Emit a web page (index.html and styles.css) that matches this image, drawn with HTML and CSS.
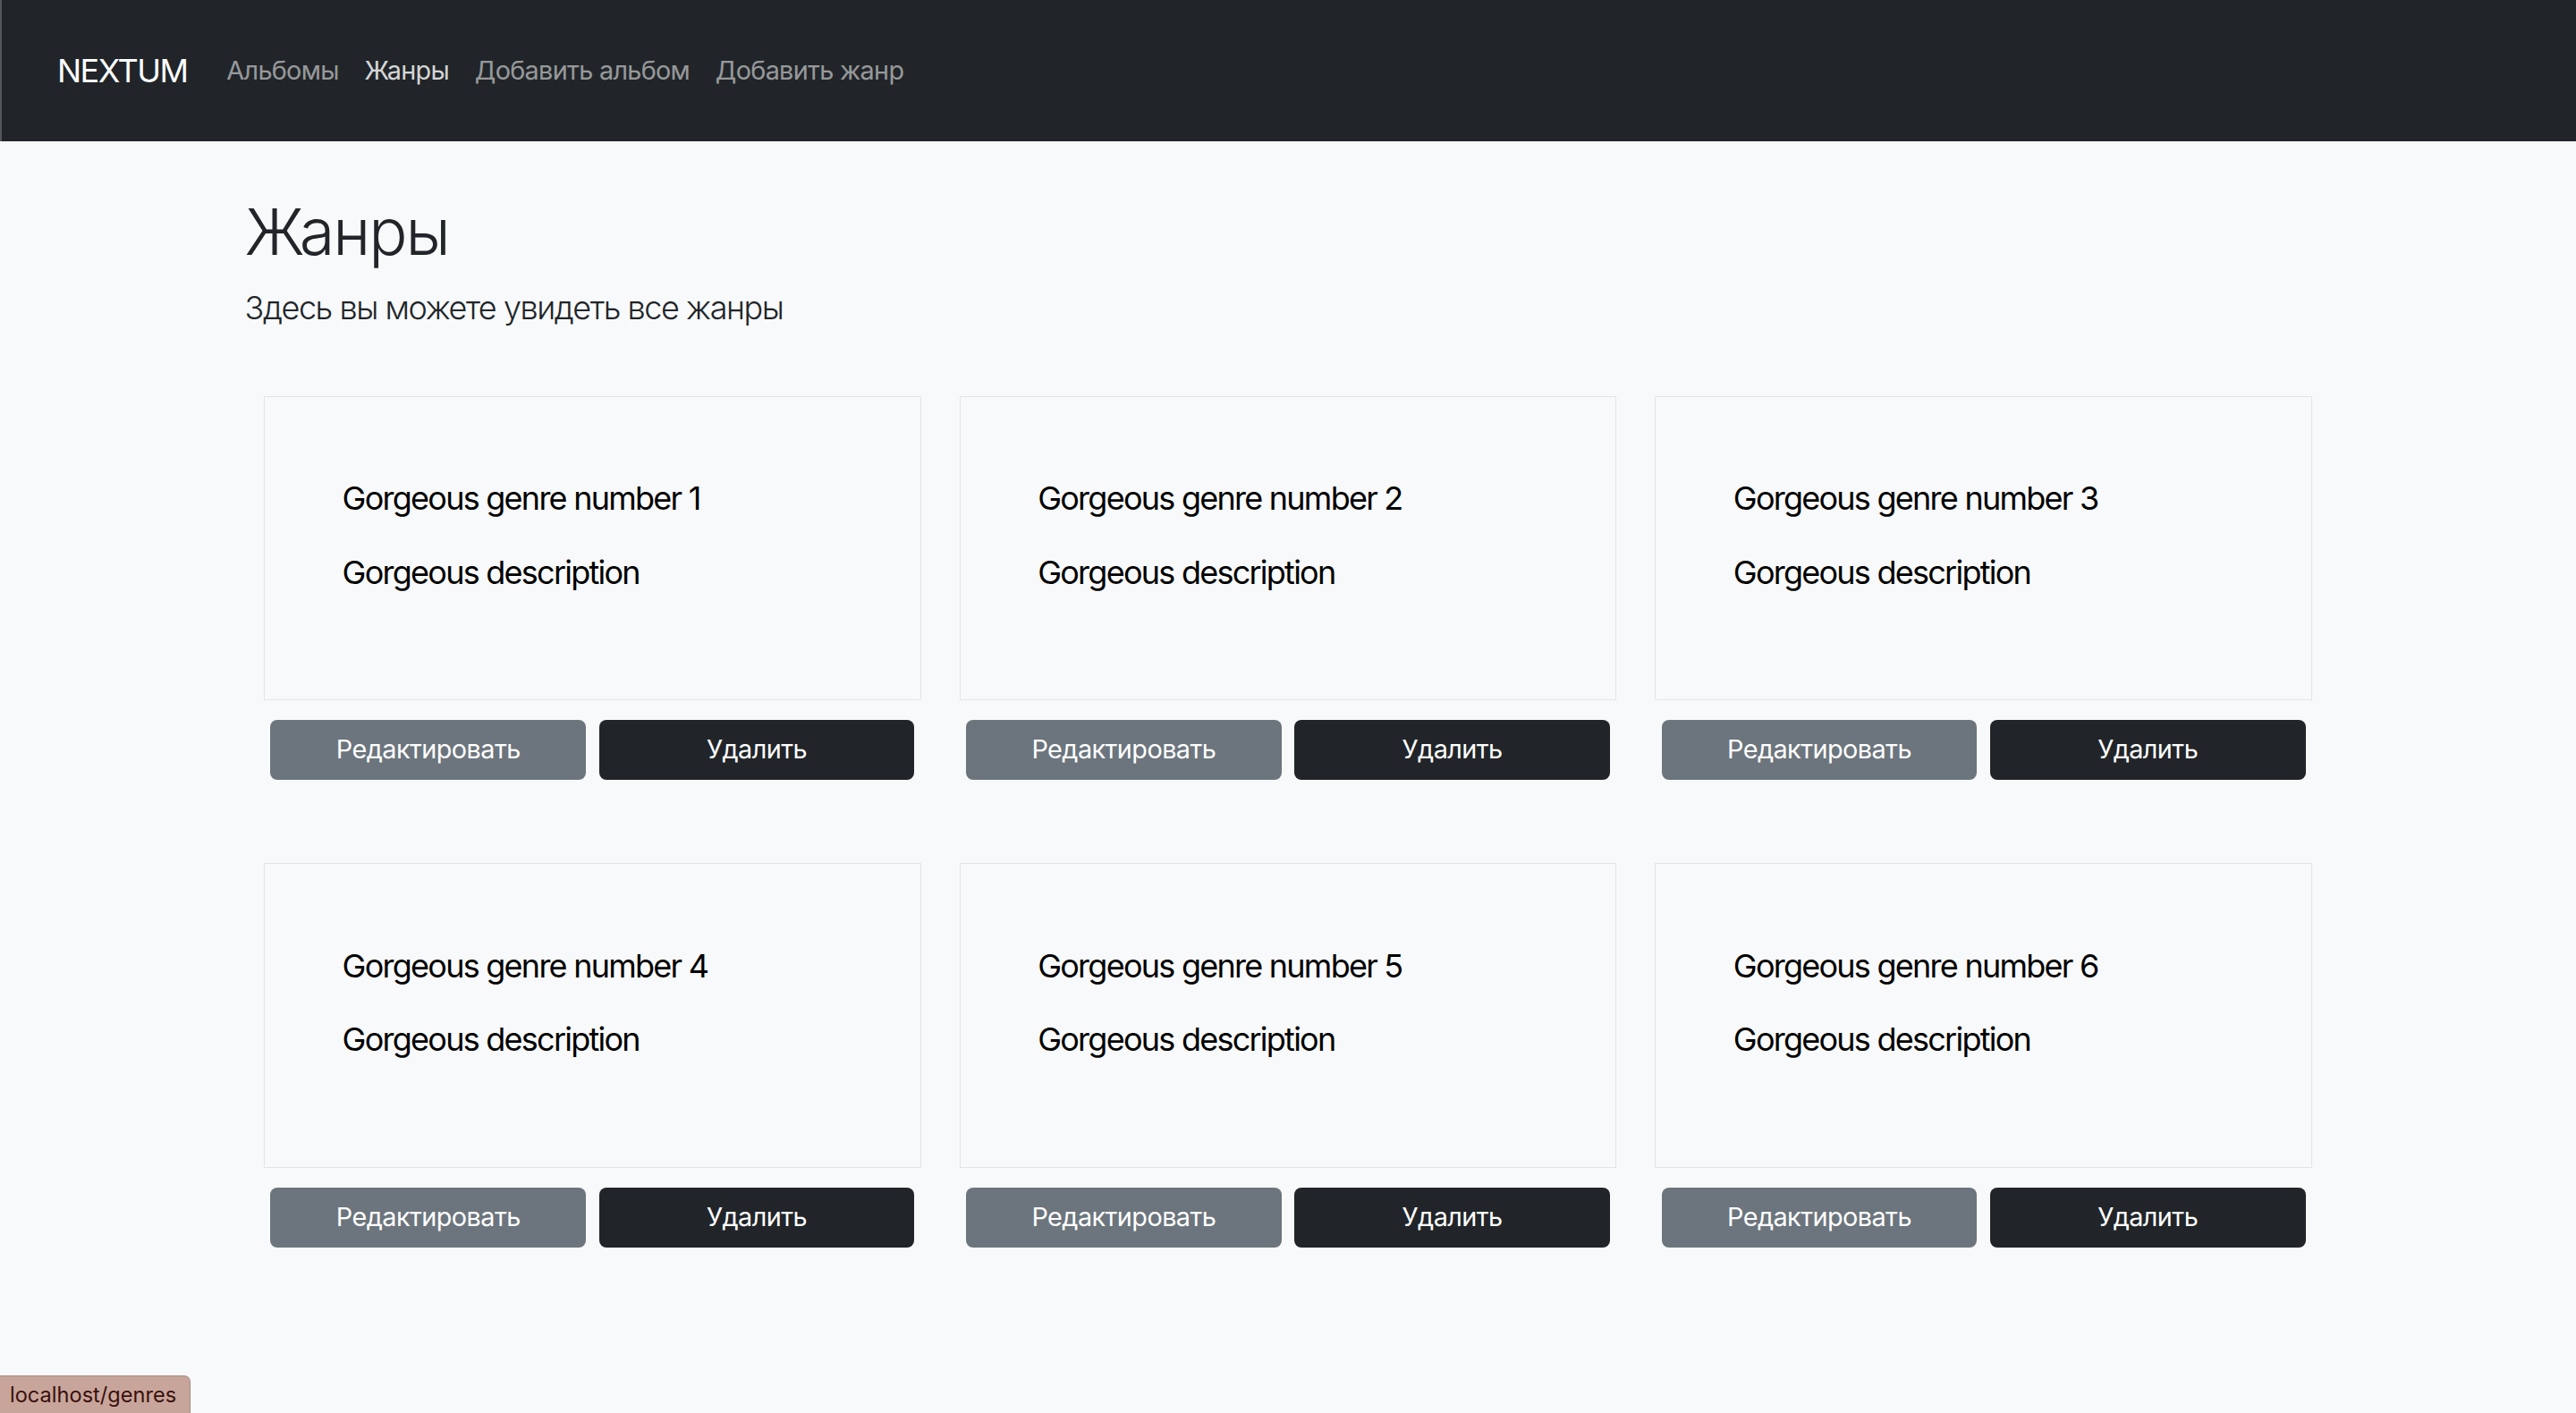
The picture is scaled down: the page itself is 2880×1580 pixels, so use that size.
FILE: index.html
```html
<!DOCTYPE html>
<html lang="ru">
<head>
<meta charset="utf-8">
<title>Жанры</title>
<link rel="stylesheet" href="styles.css">
</head>
<body>
<nav class="navbar">
  <a class="brand" href="#">NEXTUM</a>
  <ul class="nav-links">
    <li><a class="nav-link" href="#">Альбомы</a></li>
    <li><a class="nav-link hover" href="#">Жанры</a></li>
    <li><a class="nav-link" href="#">Добавить альбом</a></li>
    <li><a class="nav-link" href="#">Добавить жанр</a></li>
  </ul>
</nav>
<main class="container">
  <h1 class="title">Жанры</h1>
  <p class="lead">Здесь вы можете увидеть все жанры</p>
  <div class="grid">
    <div class="genre">
      <div class="card"><p>Gorgeous genre number 1</p><p>Gorgeous description</p></div>
      <div class="actions"><button class="btn btn-edit">Редактировать</button><button class="btn btn-delete">Удалить</button></div>
    </div>
    <div class="genre">
      <div class="card"><p>Gorgeous genre number 2</p><p>Gorgeous description</p></div>
      <div class="actions"><button class="btn btn-edit">Редактировать</button><button class="btn btn-delete">Удалить</button></div>
    </div>
    <div class="genre">
      <div class="card"><p>Gorgeous genre number 3</p><p>Gorgeous description</p></div>
      <div class="actions"><button class="btn btn-edit">Редактировать</button><button class="btn btn-delete">Удалить</button></div>
    </div>
    <div class="genre">
      <div class="card"><p>Gorgeous genre number 4</p><p>Gorgeous description</p></div>
      <div class="actions"><button class="btn btn-edit">Редактировать</button><button class="btn btn-delete">Удалить</button></div>
    </div>
    <div class="genre">
      <div class="card"><p>Gorgeous genre number 5</p><p>Gorgeous description</p></div>
      <div class="actions"><button class="btn btn-edit">Редактировать</button><button class="btn btn-delete">Удалить</button></div>
    </div>
    <div class="genre">
      <div class="card"><p>Gorgeous genre number 6</p><p>Gorgeous description</p></div>
      <div class="actions"><button class="btn btn-edit">Редактировать</button><button class="btn btn-delete">Удалить</button></div>
    </div>
  </div>
</main>
<div class="status">localhost/genres</div>
</body>
</html>
```
FILE: styles.css
```css
* { box-sizing: border-box; }
html, body { margin: 0; padding: 0; }
body {
  background: #f8f9fa;
  font-family: Inter, "Noto Sans", sans-serif;
  color: #212529;
  min-height: 1580px;
}
.navbar {
  height: 158px;
  background: #212529;
  border-left: 2px solid #54575a;
  display: flex;
  align-items: center;
  padding-left: 62px;
}
.brand {
  color: #fff;
  text-decoration: none;
  font-size: 36px;
  line-height: 54px;
  letter-spacing: -1.5px;
  margin-right: 29.5px;
}
.nav-links {
  list-style: none;
  display: flex;
  margin: 0;
  padding: 0;
}
.nav-link {
  display: block;
  padding: 14.4px;
  font-size: 28.8px;
  line-height: 43.2px;
  letter-spacing: -0.7px;
  color: rgba(255,255,255,0.55);
  text-decoration: none;
}
.nav-link.hover { color: rgba(255,255,255,0.82); }
.container {
  width: 2332.8px;
  margin: 0 auto;
}
.title {
  font-size: 72px;
  font-weight: 300;
  line-height: 86.4px;
  letter-spacing: -2px;
  margin: 58px 0 14.4px;
  color: #212529;
}
.lead {
  font-size: 36px;
  font-weight: 300;
  line-height: 54px;
  letter-spacing: -1.45px;
  margin: 0 0 72px;
  color: #212529;
}
.grid {
  display: grid;
  grid-template-columns: repeat(3, 1fr);
  row-gap: 93px;
}
.card {
  margin: 0 21.6px;
  border: 1px solid #e2e4e7;
  padding: 86.4px;
}
.card p {
  margin: 0 0 28.8px;
  font-size: 36px;
  line-height: 54px;
  letter-spacing: -1.75px;
  color: #000;
}
.actions {
  display: flex;
  gap: 14.4px;
  padding: 0 28.8px;
  margin-top: 22px;
}
.btn {
  flex: 1;
  height: 67px;
  padding: 0 0 2px;
  border: 0;
  border-radius: 8px;
  font-family: inherit;
  font-size: 28.8px;
  letter-spacing: -0.55px;
  color: #fff;
}
.btn-edit { background: #6c757d; }
.btn-delete { background: #212529; }
.status {
  position: fixed;
  left: 0;
  bottom: 0;
  height: 42px;
  padding: 0 15px 0 11px;
  background: #c8a59b;
  border: 1px solid #a48b84;
  border-left: 0;
  border-bottom: 0;
  border-top-right-radius: 7px;
  color: #3a100c;
  font-size: 23.6px;
  line-height: 42px;
}
```
